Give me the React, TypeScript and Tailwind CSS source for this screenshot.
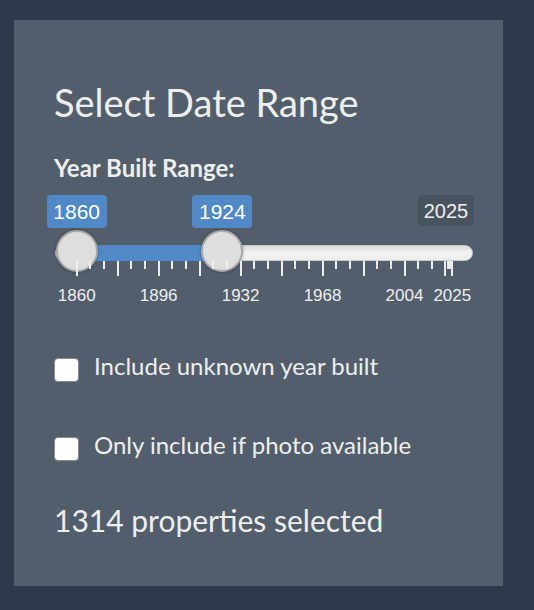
import { useState } from 'react';

const MIN = 1860;
const MAX = 2025;
const PX_PER_YEAR = 2.2764;
const OFFSET = 21.7;

const toX = (v: number) => OFFSET + (v - MIN) * PX_PER_YEAR;

// big ticks every 18 years, two small ones between
const bigTicks = [1860, 1878, 1896, 1914, 1932, 1950, 1968, 1986, 2004, 2022, 2025];
const smallTicks: number[] = [];
for (let i = 1; i < bigTicks.length; i++) {
  const a = bigTicks[i - 1];
  const b = bigTicks[i];
  const n = b - a < 18 ? 2 : 2;
  for (let z = 1; z <= n; z++) smallTicks.push(a + ((b - a) / (n + 1)) * z);
}

const gridLabels = [1860, 1896, 1932, 1968, 2004, 2025];

function RangeSlider({ from, to }: { from: number; to: number }) {
  return (
    <div className="ml-[1px] flex w-[418px] flex-col" style={{ fontFamily: '"Liberation Sans", Arial, sans-serif' }}>
      <div className="relative flex h-[33px] items-start justify-end">
        {[from, to].map((v) => (
          <div
            key={'v' + v}
            className="absolute top-0 flex h-[33px] w-[60px] -translate-x-1/2 items-center justify-center rounded-[4px] bg-[#5189c7] text-[21px] text-white"
            style={{ left: toX(v) }}
          >
            {v}
          </div>
        ))}
        <div className="mr-[-1px] flex h-[31px] w-[56px] items-center justify-center rounded-[4px] bg-[#485360] text-[20px] text-[#eeeeee]">
          {MAX}
        </div>
      </div>

      {/* track */}
      <div className="relative mt-[17px] h-[16px] rounded-full border border-[#c8c8c8] bg-gradient-to-b from-[#dcdcdc] via-[#f4f4f4] to-[#ececec]">
        <div
          className="absolute top-[-1px] h-[16px] bg-[#5189c7]"
          style={{ left: toX(from) - 1, width: toX(to) - toX(from) }}
        />
        {[from, to].map((v) => (
          <div
            key={'h' + v}
            className="absolute top-[-16px] h-[42px] w-[42px] -translate-x-1/2 rounded-full border-2 border-[#a9a9a9] bg-[#dedede] shadow-[0_0_3px_rgba(0,0,0,0.35)]"
            style={{ left: toX(v) - 1 }}
          />
        ))}
      </div>

      {/* ticks */}
      <div className="relative -z-0 h-[15px]">
        {bigTicks.map((t) => (
          <span key={'b' + t} className="absolute top-0 h-[15px] w-[2px] bg-[#eeeeee]" style={{ left: toX(t) - 1 }} />
        ))}
        {smallTicks.map((t, i) => (
          <span key={'s' + i} className="absolute top-0 h-[8px] w-[2px] bg-[#eeeeee]" style={{ left: toX(t) - 1 }} />
        ))}
      </div>

      {/* grid labels */}
      <div className="relative mt-[11px] h-[18px]">
        {gridLabels.map((t) => (
          <span
            key={'l' + t}
            className="absolute top-0 w-[50px] -translate-x-1/2 text-center text-[17px] leading-[18px] text-[#eeeeee]"
            style={{ left: toX(t) }}
          >
            {t}
          </span>
        ))}
      </div>
    </div>
  );
}

function Check({ label }: { label: string }) {
  const [checked, setChecked] = useState(false);
  return (
    <label className="flex cursor-pointer items-start gap-[15px]">
      <span
        onClick={() => setChecked(!checked)}
        className="mt-[6px] h-[24px] w-[25px] shrink-0 rounded-[4px] border border-[#8a8a8a] bg-white"
      />
      <span className="text-[24px] leading-[28px] text-[#eeeeee]">{label}</span>
    </label>
  );
}

export default function App() {
  return (
    <div className="h-[610px] w-[534px] bg-[#2d3a4b] pl-[14px] pt-[20px]" style={{ fontFamily: 'Lato, "Open Sans", sans-serif' }}>
      <div className="flex h-[566px] w-[489px] flex-col bg-[#525e6c] pl-[40px] pt-[60px]">
        <h2 className="text-[38px] leading-[44px] text-[#eeeeee]">Select Date Range</h2>
        <div className="mt-[30px] text-[24px] font-bold leading-[28px] text-[#eeeeee]">Year Built Range:</div>
        <div className="mt-[13px]">
          <RangeSlider from={1860} to={1924} />
        </div>
        <div className="mt-[47px]">
          <Check label="Include unknown year built" />
        </div>
        <div className="mt-[49px]">
          <Check label="Only include if photo available" />
        </div>
        <div className="mt-[41px] text-[30px] leading-[36px] text-[#eeeeee]">1314 properties selected</div>
      </div>
    </div>
  );
}
